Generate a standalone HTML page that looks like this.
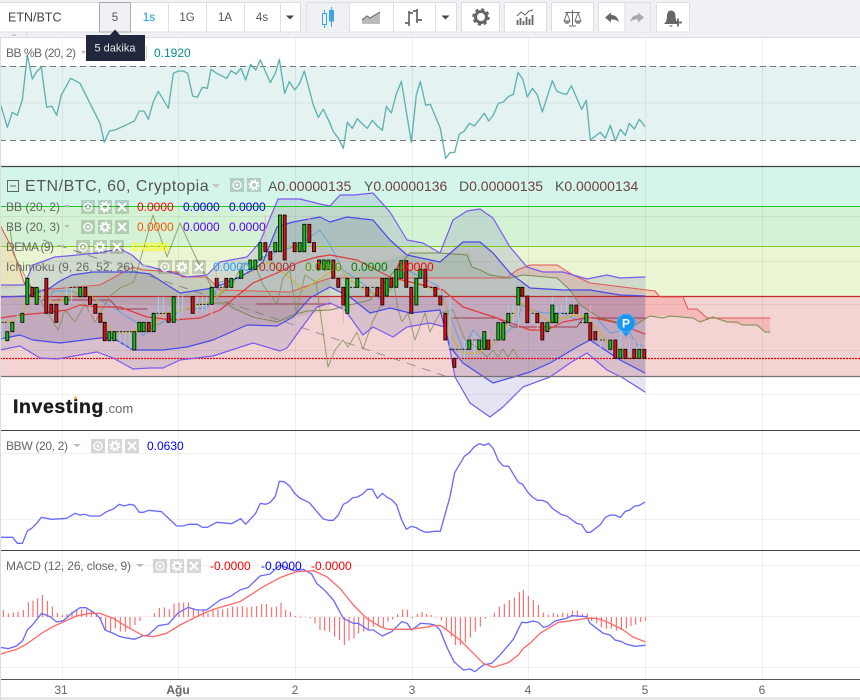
<!DOCTYPE html>
<html><head><meta charset="utf-8"><title>ETN/BTC</title>
<style>
html,body{margin:0;padding:0;background:#fff;width:860px;height:700px;overflow:hidden}
svg{display:block;font-family:"Liberation Sans",sans-serif}
.l{font-size:12px;fill:#666}
.v{font-size:12px}
.t{font-size:11.5px;fill:#555;text-anchor:middle}
.a{font-size:12px;fill:#666;text-anchor:middle}
.p{fill:none;stroke-linejoin:round;stroke-linecap:round}
.h{font-size:14px;fill:#703f3f}
.h tspan{fill:#555}
</style></head><body>
<svg width="860" height="700" viewBox="0 0 860 700" xmlns="http://www.w3.org/2000/svg">
<defs>
<g id="eye"><rect width="14" height="14" fill="#000" opacity=".16"/><circle cx="7" cy="7" r="4" fill="none" stroke="#fff" stroke-width="1.3"/><circle cx="7" cy="7" r="1.4" fill="#fff"/></g>
<g id="gear"><rect width="14" height="14" fill="#000" opacity=".16"/><circle cx="7" cy="7" r="3" fill="none" stroke="#fff" stroke-width="2"/><circle cx="7" cy="7" r="4.8" fill="none" stroke="#fff" stroke-width="1.6" stroke-dasharray="2 1.77"/></g>
<g id="x"><rect width="14" height="14" fill="#000" opacity=".16"/><path d="M3 3L11 11M11 3L3 11" stroke="#fff" stroke-width="2"/></g>
<g id="tri"><use href="#eye"/><use href="#gear" x="17"/><use href="#x" x="34"/></g>
</defs>

<rect width="860" height="700" fill="#fff"/>

<!-- panel 1 -->
<rect x="0" y="66" width="860" height="74" fill="#e4f2f1"/>
<path d="M0 103H860" stroke="#d6e7e5"/>

<!-- main zones -->
<rect x="0" y="167" width="860" height="40" fill="#d3f5ea"/>
<rect x="0" y="207" width="860" height="39.500" fill="#d4f3d5"/>
<rect x="0" y="246.500" width="860" height="50" fill="#e9f5d3"/>
<rect x="0" y="296.500" width="860" height="80" fill="#f4d3d3"/>

<!-- horizontal grid -->
<g stroke="#000" stroke-opacity=".06">
<path d="M0 216.500H860M0 261.500H860M0 304.500H860M0 350.500H860M0 394.500H860"/>
<path d="M0 453.500H860M0 519.500H860"/>
<path d="M0 565.500H860M0 616.500H860M0 667.500H860"/>
<path d="M62.500 38V680M178.500 38V680M295.500 38V680M412.500 38V680M528.500 38V680M645.500 38V680M762.500 38V680"/>
</g>

<!-- panel 1 dashes + line -->
<path d="M0 66.500H860M0 140.500H860" stroke="#777" stroke-width="1" stroke-dasharray="6 4"/>
<g transform="translate(0,40) scale(.33333)"><path class="p" stroke="#5fb1b0" stroke-width="4" d="M3 197L22 262 37 217 52 226 67 180 82 45 97 117 110 95 124 82 140 202 155 198 170 226 184 165 212 115 240 130 300 250 313 307 328 273 345 270 372 258 403 243 418 213 432 213 445 238 460 185 475 154 505 205 520 100 535 93 550 93 563 100 578 168 592 172 607 142 622 145 633 88 650 100 680 115 693 92 708 102 723 85 737 120 752 73 767 90 781 60 811 128 827 97 838 58 854 160 868 125 884 150 899 130 913 93 940 195 955 232 970 208 990 250"/></g>
<g transform="translate(330,40) scale(.33333)"><path class="p" stroke="#5fb1b0" stroke-width="4" d="M0 250L10 275 25 295 40 325 52 247 67 265 82 236 97 252 112 265 127 241 142 258 157 271 169 199 184 219 198 165 214 124 244 307 259 165 271 124 287 196 301 193 331 265 347 355 360 338 374 337 388 283 403 273 418 250 433 258 463 220 476 243 490 225 505 190 520 186 536 169 550 163 564 97 578 117 592 171 607 145 622 165 637 216 667 122 680 153 695 160 710 163 724 137 755 208 769 181 781 300 811 277 826 295 841 256 856 303 871 268 886 286 898 250 913 267 928 238 944 258"/></g>

<!-- ichimoku clouds -->
<path d="M0 222L13 250 25 285 0 290Z" fill="#e89a50" opacity=".18"/>
<path d="M25 285L40 290 100 285 133 267 177 272 207 277 220 290 290 292 330 278 330 310 277 322 233 308 207 303 150 305 60 300Z" fill="#9a7a40" opacity=".13"/>
<path d="M410 253L470 253 472 267 490 275 510 278 470 278 330 278Z" fill="#40b040" opacity=".1"/>
<path d="M510 278L517 270 530 265 557 265 573 275 590 283 655 291 660 297 683 297 688 309 697 309 707 318 770 318 770 332 765 332 757 325 742 325 727 322 713 317 700 322 693 318 670 316 650 316 635 325 620 323 600 318 580 305 570 290 557 278 523 275Z" fill="#ff4040" opacity=".18"/>

<!-- BB fills -->
<path d="M0 285L24 285 33 265 55 257 67 256 97 253 120 249 132 255 143 265 170 272 187 277 207 275 220 262 247 257 260 242 278 199 300 199 320 204 330 206 340 195 355 195 373 193 390 212 407 240 423 243 440 253 453 220 467 211 480 209 493 218 510 247 527 267 543 272 563 272 587 279 607 275 620 278 645 277 645 392 623 378 607 370 587 353 570 363 550 377 523 387 503 407 490 417 470 403 455 377 450 350 445 327 430 323 407 327 393 337 373 327 363 335 345 310 330 303 317 307 300 330 287 348 280 351 253 343 213 356 180 360 163 368 150 368 133 369 113 358 97 352 57 359 40 358 20 346 0 350Z" fill="#5a5ab0" opacity=".16"/>
<path d="M0 297L27 296 50 288 60 281 72 275 93 272 133 272 150 274 180 293 200 290 213 288 233 280 253 270 263 262 277 227 293 222 320 217 330 222 347 217 373 220 390 240 407 255 440 262 463 242 480 242 493 253 510 273 530 288 563 290 590 290 620 295 645 296 645 373 620 360 590 340 577 347 550 363 530 372 510 378 493 383 463 363 450 347 440 310 410 313 390 308 370 313 350 297 330 287 310 298 293 317 277 326 247 325 213 340 187 347 163 350 133 350 113 338 100 338 60 343 33 340 20 335 0 339Z" fill="#504078" opacity=".17"/>

<!-- zone lines -->
<path d="M0 206.500H860" stroke="#1fc81f"/>
<path d="M0 246.500H860" stroke="#80cc20"/>
<path d="M0 296.500H860" stroke="#c22a2a" stroke-width="1.200"/>
<path d="M0 358.500H860" stroke="#f00" stroke-dasharray="2 1" stroke-width="1.200"/>

<!-- dashed trend -->
<path d="M43 240L445 376" stroke="#777" stroke-opacity=".75" stroke-dasharray="9 7" fill="none"/>

<!-- ichimoku lines -->
<path class="p" stroke="#e25555" d="M0 225L13 250 25 285 40 290 100 285 133 267 143 270 177 272 182 277 207 277 220 290 290 292 330 278 507 278 517 270 530 265 557 265 573 275 590 283 655 291 660 297 683 297 688 309 697 309 707 318 770 318"/>
<path class="p" stroke="#7a8a50" d="M207 303L227 303 233 308 253 317 277 322 293 315 307 311 330 310 370 300 395 270 410 253 440 253 467 255 472 267 480 270 490 275 510 278 523 275 557 278 570 290 580 305 600 318 620 323 635 325 650 316 663 318 670 316 693 318 700 322 713 317 727 322 737 322 742 325 757 325 765 332 770 332"/>
<path class="p" stroke="#a03a4a" d="M42 300H110L118 309H147M257 304H330M453 318H497L513 327H577L583 318H645"/>
<!-- chikou -->
<path class="p" stroke="#7f8f55" stroke-opacity=".8" d="M10 227L13 253 27 280 40 300 58 330 65 310 75 322 85 304 95 322 110 296 120 288 134 282 153 215 167 257 180 223 197 260 217 297 233 283 243 263 257 270 263 285 277 304 283 278 290 270 296 313 305 275 316 282 328 367 335 350 343 340 348 347 357 332 363 349 372 323 380 307 393 278 398 310 402 322 408 313 415 340 425 313 430 332 440 313 453 310 465 340 475 346 487 357 493 350 498 357 503 349 508 357 513 349 518 358"/>

<!-- tenkan -->
<path class="p" stroke="#5b9bd5" stroke-opacity=".85" d="M50 298L53 291 72 291 80 295 100 300 117 310 137 323 143 336 153 327 173 317 180 310 207 308 213 297 220 282 240 278 250 270 263 257 277 252 300 245 320 230 330 245 343 270 355 278 367 287 380 300 393 287 400 278 407 270 440 287 445 305 453 323 463 350 473 330 490 347 507 332 517 323 522 305 532 310 543 313 563 313 577 320 597 318 610 333 625 330 630 333 637 345 645 346"/>
<!-- DEMA -->
<path class="p" stroke="#c9b244" stroke-opacity=".85" stroke-width="1.500" d="M2 322L13 322 23 313 28 300 37 290 43 297 57 303 67 297 80 290 97 300 103 320 113 332 127 333 137 330 153 330 163 313 173 313 213 300 233 280 250 272 270 262 290 278 303 290 338 267 350 280 370 293 387 293 397 280 400 280 430 287 445 303 453 340 463 353 477 353 490 347 500 337 510 320 522 303 537 313 550 322 573 315 587 317 597 330 610 345 623 350 633 357 645 358"/>

<!-- BB lines -->
<path class="p" stroke="#7a5af0" stroke-width="1.200" d="M0 285L24 285 33 265 55 257 67 256 97 253 120 249 132 255 143 265 170 272 187 277 207 275 220 262 247 257 260 242 278 199 300 199 320 204 330 206 340 195 355 195 373 193 390 212 407 240 423 243 440 253 453 220 467 211 480 209 493 218 510 247 527 267 543 272 563 272 587 279 607 275 620 278 645 277"/>
<path class="p" stroke="#7a5af0" stroke-width="1.200" d="M0 350L20 346 40 358 57 359 97 352 113 358 133 369 150 368 163 368 180 360 213 356 253 343 280 351 287 348 300 330 317 307 330 303 345 310 363 335 373 327 393 337 407 327 430 323 445 327 450 350 455 377 470 403 490 417 503 407 523 387 550 377 570 363 587 353 607 370 623 378 645 392"/>
<path class="p" stroke="#4a4ae8" stroke-width="1.200" d="M0 297L27 296 50 288 60 281 72 275 93 272 133 272 150 274 180 293 200 290 213 288 233 280 253 270 263 262 277 227 293 222 320 217 330 222 347 217 373 220 390 240 407 255 440 262 463 242 480 242 493 253 510 273 530 288 563 290 590 290 620 295 645 296"/>
<path class="p" stroke="#4a4ae8" stroke-width="1.200" d="M0 339L20 335 33 340 60 343 100 338 113 338 133 350 163 350 187 347 213 340 247 325 277 326 293 317 310 298 330 287 350 297 370 313 390 308 410 313 440 310 450 347 463 363 493 383 510 378 530 372 550 363 577 347 590 340 620 360 645 373"/>
<path class="p" stroke="#e03a3a" stroke-width="1.200" d="M0 318L20 315 43 313 67 310 80 305 100 307 120 307 147 317 173 320 200 318 220 310 253 283 277 273 300 262 317 257 330 255 357 260 390 277 443 290 463 307 497 318 530 330 547 330 563 322 590 317 613 322 645 334"/>

<!-- candles: zoom-4 coords -->
<g transform="translate(0,270) scale(.33333)">
<path stroke="#9fd3e6" stroke-width="3" d="M7 150V210M52 130V157M125 20V90M200 50V80M215 50V100M360 185V230M375 185V235M390 185V235M475 80V130M490 80V130M535 70V150M548 70V130M592 80V130M608 80V130M620 80V130"/>
<path stroke="#f5a9b5" stroke-width="3" d="M270 103V150M286 130V150M635 103V150"/>
<path stroke="#000" stroke-width="2.500" stroke-dasharray="6 4" d="M5 157H20M210 52H232M340 185H395M470 130H495M590 103H630M660 52H672M705 25H720"/>
<path fill="#0fc40f" stroke="#000" stroke-width="2.500" d="M17.500 185h9v27h-9zM32.500 157h9v28h-9zM62.500 130h9v27h-9zM77.500 25h9v78h-9zM105.500 52h9v51h-9zM194.500 80h9v23h-9zM236.500 52h9v28h-9zM323.500 185h9v27h-9zM338.500 185h9v27h-9zM398.500 185h9v55h-9zM413.500 157h9v28h-9zM426.500 157h9v28h-9zM456.500 130h9v55h-9zM516.500 80h9v77h-9zM630.500 52h9v51h-9zM689.500 25h9v27h-9zM719.500 0h9v25h-9z"/>
<path fill="#e01010" stroke="#000" stroke-width="2.500" d="M92.500 52h9v28h-9zM134.500 25h9v105h-9zM149.500 103h9v27h-9zM164.500 103h9v54h-9zM251.500 52h9v28h-9zM265.500 80h9v23h-9zM281.500 103h9v27h-9zM296.500 130h9v27h-9zM309.500 157h9v55h-9zM441.500 157h9v28h-9zM501.500 130h9v27h-9zM573.500 80h9v50h-9zM645.500 25h9v27h-9zM674.500 25h9v27h-9z"/>
</g>
<g transform="translate(0,170) scale(.33333)">
<path stroke="#f5a9b5" stroke-width="3" d="M796 135V218M928 140V163M649 290V325"/>
<path fill="#0fc40f" stroke="#000" stroke-width="2.500" d="M746.500 270h9v28h-9zM761.500 270h9v28h-9zM776.500 218h9v52h-9zM821.500 218h9v27h-9zM835.500 135h9v110h-9zM894.500 218h9v27h-9zM908.500 163h9v82h-9zM966.500 270h9v28h-9zM980.500 270h9v28h-9z"/>
<path fill="#e01010" stroke="#000" stroke-width="2.500" d="M791.500 218h9v27h-9zM806.500 245h9v25h-9zM849.500 135h9v135h-9zM879.500 218h9v27h-9zM923.500 163h9v55h-9zM937.500 218h9v27h-9zM952.500 270h9v28h-9z"/>
</g>
<g transform="translate(330,190) scale(.33333)">
<path stroke="#9fd3e6" stroke-width="3" d="M360 320V480M390 470V505M403 450V505M433 425V500M535 345V415M550 345V400M565 345V420M608 370V400M667 320V345M680 345V400M695 345V370M710 320V370M811 450V500M871 420V478M898 450V505M928 460V478"/>
<path stroke="#f5a9b5" stroke-width="3" d="M40 345V400M113 265V292M128 265V292M301 265V292M331 265V318M475 425V450M622 398V420M781 345V398M886 450V478M913 450V478M943 450V478"/>
<path stroke="#000" stroke-width="2.500" stroke-dasharray="6 4" d="M60 292H80M95 292H110M125 292H135M300 292H312M358 478H412M430 450H445M490 450H500M545 370H555M605 370H615M695 370H720M750 398H765M810 450H825M895 505H908"/>
<path fill="#0fc40f" stroke="#000" stroke-width="2.500" d="M47.500 265h9v105h-9zM77.500 265h9v27h-9zM165.500 265h9v53h-9zM194.500 238h9v54h-9zM209.500 212h9v53h-9zM254.500 265h9v80h-9zM266.500 238h9v27h-9zM413.500 450h9v28h-9zM443.500 450h9v28h-9zM458.500 425h9v53h-9zM500.500 398h9v52h-9zM515.500 398h9v52h-9zM530.500 370h9v28h-9zM560.500 292h9v53h-9zM647.500 398h9v27h-9zM662.500 345h9v53h-9zM674.500 370h9v28h-9zM719.500 345h9v25h-9zM764.500 370h9v28h-9zM836.500 450h9v28h-9zM866.500 478h9v27h-9zM923.500 478h9v27h-9z"/>
<path fill="#e01010" stroke="#000" stroke-width="2.500" d="M5.500 210h9v55h-9zM20.500 265h9v27h-9zM35.500 292h9v53h-9zM107.500 292h9v26h-9zM137.500 292h9v26h-9zM152.500 265h9v80h-9zM179.500 265h9v27h-9zM224.500 212h9v80h-9zM239.500 292h9v78h-9zM281.500 238h9v54h-9zM311.500 292h9v26h-9zM326.500 318h9v27h-9zM341.500 370h9v80h-9zM368.500 505h9v27h-9zM470.500 450h9v28h-9zM572.500 292h9v26h-9zM587.500 318h9v80h-9zM617.500 370h9v28h-9zM632.500 398h9v52h-9zM734.500 345h9v25h-9zM776.500 398h9v52h-9zM791.500 425h9v25h-9zM851.500 450h9v55h-9zM881.500 478h9v27h-9zM908.500 478h9v27h-9zM938.500 478h9v27h-9z"/>
</g>

<!-- P bubble -->
<path d="M621 330L626 337 631 330Z" fill="#1a96f0"/>
<circle cx="626" cy="323" r="9" fill="#1a96f0" stroke="#45b0f5" stroke-width="1"/>
<text x="626" y="327.500" font-size="12" font-weight="bold" fill="#fff" text-anchor="middle">P</text>

<!-- Investing logo -->
<text x="13" y="413" font-size="19.500" font-weight="bold" fill="#1c1c1c" stroke="#1c1c1c" stroke-width=".35" letter-spacing=".6">Investing</text>
<text x="105" y="413" font-size="13" fill="#666">.com</text>
<path d="M74 397.500l2-1.500 .8 2-2 2z" fill="#f5a623"/>

<!-- panel dividers -->
<path d="M0 166.500H860" stroke="#444" stroke-width="1.200"/>
<path d="M0 376.500H860" stroke="#7a7070" stroke-width="1.200"/>
<path d="M0 430.500H860" stroke="#444"/>
<path d="M0 550.500H860" stroke="#444"/>
<path d="M0 679.500H860" stroke="#555"/>

<!-- BBW -->
<g transform="translate(0,425) scale(.33333)"><path class="p" stroke="#6a6aff" stroke-width="4" d="M0 337L38 337 52 355 67 355 82 318 95 310 110 295 124 277 155 283 200 280 225 265 240 270 255 268 270 273 300 273 320 260 340 252 358 238 373 243 388 238 403 241 418 262 430 262 445 256 485 260 500 275 530 303 550 303 565 298 592 298 607 307 622 307 650 292 695 296 722 281 737 298 767 265 781 235 797 238 811 232 826 214 838 169 852 170 868 182 884 205 899 219 928 233 955 265 970 282 990 287"/></g>
<g transform="translate(330,425) scale(.33333)"><path class="p" stroke="#6a6aff" stroke-width="4" d="M0 286L10 286 25 270 40 238 52 232 67 219 82 216 97 208 112 193 127 193 142 220 157 205 170 216 185 224 200 240 215 285 229 313 244 304 259 308 274 317 288 322 315 319 331 319 360 215 374 143 403 94 418 83 433 65 448 56 463 61 476 55 490 71 505 107 520 123 536 124 565 172 578 178 592 200 607 216 622 226 637 226 652 232 667 250 695 269 710 273 740 295 755 299 770 322 781 322 811 299 826 277 841 270 856 271 871 277 886 259 898 256 913 244 928 241 944 232"/></g>

<!-- MACD -->
<g transform="translate(0,550) scale(.33333)">
<path fill="none" stroke="#ff4444" stroke-width="3" stroke-opacity=".9" d="M10 201V180M25 201V190M40 201V187M54 201V185M70 201V180M85 201V157M99 201V152M113 201V145M127 201V135M142 201V153M157 201V170M172 201V189M187 201V195M201 201V192M216 201V185M230 201V178M245 201V178M260 201V178M274 201V185M289 201V190M303 201V215M317 201V240M332 201V245M346 201V235M361 201V245M376 201V245M390 201V235M405 201V225M420 201V213M463 201V189M478 201V174M493 201V172M508 201V178M522 201V160M537 201V158M551 201V158M565 201V158M580 201V175M595 201V180M610 201V178M624 201V190M639 201V180M654 201V178M668 201V178M683 201V175M698 201V170M712 201V170M727 201V168M741 201V172M755 201V170M770 201V168M785 201V162M799 201V162M815 201V172M829 201V170M843 201V158M857 201V180M871 201V185M886 201V198M901 201V204M916 201V202M931 201V205M945 201V220M960 201V240M974 201V242M989 201V245M1004 201V260M1019 201V270M1033 201V285M1047 201V272M1062 201V265M1076 201V250M1091 201V245M1105 201V240M1120 201V230M1135 201V225M1150 201V232M1164 201V215M1178 201V208M1193 201V192M1208 201V178M1222 201V180M1237 201V205M1252 201V192M1266 201V186M1280 201V192"/>
<path class="p" stroke="#6a6aff" stroke-width="4" d="M0 292L25 296 50 288 68 272 82 240 97 225 125 190 150 200 170 216 190 212 215 190 240 173 258 173 285 190 300 205 315 240 340 250 360 260 403 268 430 257 445 255 475 227 505 222 535 188 565 172 590 180 620 180 660 150 690 140 720 120 745 112 780 78 810 72 840 45 880 62 910 58 935 72 950 100 975 122 1000 150 1030 205 1060 220 1075 220 1105 240 1120 240 1147 258 1175 245 1205 215 1222 220 1235 240 1262 220 1290 222"/>
<path class="p" stroke="#ff6a6a" stroke-width="4" d="M0 313L25 305 50 298 80 282 125 250 155 232 185 218 230 198 270 190 300 190 340 205 380 230 430 257 460 260 500 250 540 225 600 195 640 178 720 155 790 110 840 83 890 65 940 62 980 80 1020 115 1060 165 1100 205 1140 230 1165 238 1230 238 1290 230"/>
</g>
<g transform="translate(430,550) scale(.33333)">
<path fill="none" stroke="#ff4444" stroke-width="3" stroke-opacity=".9" d="M3 201V195M18 201V203M34 201V212M49 201V238M64 201V260M76 201V285M91 201V285M106 201V278M121 201V263M136 201V245M151 201V230M166 201V206M193 201V188M208 201V170M223 201V161M238 201V150M253 201V143M268 201V126M280 201V120M295 201V138M310 201V150M325 201V165M340 201V188M355 201V195M370 201V188M383 201V192M398 201V188M413 201V190M427 201V182M442 201V182M457 201V191M472 201V191M485 201V213M500 201V220M514 201V232M529 201V236M544 201V236M559 201V242M574 201V240M589 201V236M603 201V228M617 201V224M632 201V216M647 201V212"/>
<path class="p" stroke="#6a6aff" stroke-width="4" d="M0 222L15 225 30 240 50 290 72 335 100 360 120 357 135 365 160 345 185 340 210 315 250 268 275 217 290 218 310 213 325 217 340 232 355 228 375 213 410 205 425 197 470 200 480 220 520 250 540 255 555 270 575 275 590 283 615 289 645 286"/>
<path class="p" stroke="#ff6a6a" stroke-width="4" d="M0 228L30 226 50 240 90 270 130 310 160 340 190 352 235 338 265 315 280 295 300 280 330 250 385 217 425 212 470 205 500 205 530 215 580 240 610 262 645 275"/>
</g>

<!-- time axis -->
<rect x="0" y="697" width="860" height="3" fill="#e8e8e8"/>
<text class="a" x="61" y="694">31</text>
<text class="a" x="178" y="694" font-weight="bold">Ağu</text>
<text class="a" x="295" y="694">2</text>
<text class="a" x="412" y="694">3</text>
<text class="a" x="528" y="694">4</text>
<text class="a" x="645" y="694">5</text>
<text class="a" x="762" y="694">6</text>
<rect x="0" y="38" width="1" height="662" fill="#dcdde0"/>

<!-- legends -->
<text class="l" x="6" y="57" textLength="70">BB %B (20, 2)</text>
<path d="M81 51h5l-2.500 3z" fill="#bbb"/>
<rect x="146" y="46" width="1" height="13" fill="#ccc"/>
<text class="v" x="154" y="57" fill="#078c8c">0.1920</text>

<rect x="7.500" y="180.500" width="11" height="11" fill="none" stroke="#666"/>
<path d="M10 186H16" stroke="#666"/>
<text x="25" y="191" font-size="16" fill="#555" letter-spacing=".53">ETN/BTC, 60, Cryptopia</text>
<path d="M212 184h8l-4 4z" fill="#c4c4c4"/>
<use href="#eye" x="230" y="178"/><use href="#gear" x="247" y="178"/>
<text class="h" x="268" y="191"><tspan>A</tspan>0.00000135</text>
<text class="h" x="364" y="191"><tspan>Y</tspan>0.00000136</text>
<text class="h" x="459" y="191"><tspan>D</tspan>0.00000135</text>
<text class="h" x="555" y="191"><tspan>K</tspan>0.00000134</text>

<text class="l" x="6" y="211">BB (20, 2)</text>
<path d="M64 205h6l-3 3z" fill="#bbb"/>
<use href="#tri" x="81" y="200"/>
<text class="v" x="137" y="211" fill="#ff0000">0.0000</text>
<text class="v" x="183" y="211" fill="#0000ff">0.0000</text>
<text class="v" x="229" y="211" fill="#0000ff">0.0000</text>

<text class="l" x="6" y="231">BB (20, 3)</text>
<path d="M64 225h6l-3 3z" fill="#bbb"/>
<use href="#tri" x="81" y="220"/>
<text class="v" x="137" y="231" fill="#ff5500">0.0000</text>
<text class="v" x="183" y="231" fill="#5500ff">0.0000</text>
<text class="v" x="229" y="231" fill="#5500ff">0.0000</text>

<text class="l" x="6" y="251" textLength="48">DEMA (9)</text>
<path d="M59 245h6l-3 3z" fill="#bbb"/>
<use href="#tri" x="76" y="240"/>
<text class="v" x="132" y="251" fill="#ffff00" stroke="#ffff00" stroke-width=".3">0.0000</text>

<text class="l" x="6" y="271" textLength="128">Ichimoku (9, 26, 52, 26)</text>
<path d="M141 265h6l-3 3z" fill="#bbb"/>
<use href="#tri" x="158" y="260"/>
<text class="v" x="213" y="271" fill="#2299ff">0.0000</text>
<text class="v" x="259" y="271" fill="#a03030">0.0000</text>
<text class="v" x="305" y="271" fill="#559900">0.0000</text>
<text class="v" x="351" y="271" fill="#008000">0.0000</text>
<text class="v" x="397" y="271" fill="#ff0000">0.0000</text>

<text class="l" x="6" y="450" textLength="62">BBW (20, 2)</text>
<path d="M73 444h8l-4 3z" fill="#bbb"/>
<use href="#tri" x="91" y="439"/>
<text class="v" x="147" y="450" fill="#0000ff">0.0630</text>

<text class="l" x="6" y="570" textLength="125">MACD (12, 26, close, 9)</text>
<path d="M136 564h8l-4 3z" fill="#bbb"/>
<use href="#tri" x="153" y="559"/>
<text class="v" x="210" y="570" fill="#ff0000">-0.0000</text>
<text class="v" x="261" y="570" fill="#0000ff">-0.0000</text>
<text class="v" x="311" y="570" fill="#ff0000">-0.0000</text>

<!-- toolbar -->
<rect x="0" y="0" width="860" height="37" fill="#f0f1f5"/>
<rect x="0" y="37" width="860" height="1" fill="#dcdde0"/>
<path d="M26.500 32V37" stroke="#dcdde0"/>
<path d="M11 36h6l-3-2.500z" fill="#ccc"/>
<g fill="#fff" stroke="#dcdee2">
<rect x="-1" y="2.500" width="301.500" height="29.500"/>
<rect x="306.500" y="2.500" width="150" height="29.500"/>
<rect x="461.500" y="2.500" width="38" height="29.500"/>
<rect x="504.500" y="2.500" width="42" height="29.500"/>
<rect x="551.500" y="2.500" width="42" height="29.500"/>
<rect x="598.500" y="2.500" width="52" height="29.500"/>
<rect x="656.500" y="2.500" width="33" height="29.500"/>
</g>
<rect x="307" y="3" width="42" height="29" fill="#f0f1f5"/>
<rect x="625" y="3" width="25" height="29" fill="#f0f1f5"/>
<rect x="99.500" y="2.500" width="31" height="29.500" fill="#f0f1f5" stroke="#aaa"/>
<path d="M168.500 3V32M206.500 3V32M244.500 3V32M280.500 3V32M349.500 3V32M393.500 3V32M435.500 3V32M625 3V32" stroke="#dcdee2"/>
<text x="8" y="21.500" font-size="12.500" fill="#444">ETN/BTC</text>
<text class="t" x="115" y="21">5</text>
<text class="t" x="149" y="21" style="fill:#3cabe0" stroke="#3cabe0" stroke-width=".25">1s</text>
<text class="t" x="187" y="21">1G</text>
<text class="t" x="225" y="21">1A</text>
<text class="t" x="262" y="21">4s</text>
<path d="M286 15.500h8l-4 4z" fill="#444"/>
<path d="M441.500 15.500h8l-4 4z" fill="#444"/>

<!-- candle icon -->
<g stroke="#3aa8e0" fill="none">
<rect x="322.500" y="13.500" width="4" height="11"/>
<path d="M324.500 10V13M324.500 25V28M331.500 7V10M331.500 21V27"/>
<rect x="329.500" y="10.500" width="4" height="10.500" fill="#3aa8e0"/>
</g>
<!-- area icon -->
<path d="M362 24V20L367 16 370 18 375 15 380 12V24Z" fill="#bbb"/>
<path d="M362 20L367 16 370 18 375 15 380 12" fill="none" stroke="#777" stroke-width="1.300"/>
<!-- bars icon -->
<path d="M409 11V26M405 23H409M409 13H413M417 9V23M413 11H417M417 20H422" fill="none" stroke="#666" stroke-width="1.700"/>
<!-- gear -->
<circle cx="481" cy="17" r="5.500" fill="none" stroke="#666" stroke-width="3"/>
<circle cx="481" cy="17" r="7.500" fill="none" stroke="#666" stroke-width="2.500" stroke-dasharray="3 2.890"/>
<!-- indicators icon -->
<path d="M517.500 25V20M520.500 25V18M523.500 25V21M526.500 25V17M529.500 25V19M532.500 25V15" stroke="#666" stroke-width="1.800"/>
<path d="M517 16L521 12 525 15 529 11 533 10" fill="none" stroke="#666" stroke-width="1"/>
<!-- scales -->
<path d="M572.500 10V25M565 12.500H580M569 26H576" stroke="#666" fill="none"/>
<path d="M567 13L564 21H570ZM578 13L575 21H581Z" fill="none" stroke="#666" stroke-width=".9"/>
<path d="M564 21A3 3 0 0 0 570 21ZM575 21A3 3 0 0 0 581 21Z" fill="#888"/>
<!-- undo / redo -->
<path d="M605 17.500L611 12.500V15C616 15 618 18 619 22.500 617 19.500 614 19.500 611 19.500V22.500Z" fill="#666"/>
<path d="M644 17.500L638 12.500V15C633 15 631 18 630 22.500 632 19.500 635 19.500 638 19.500V22.500Z" fill="#aaa"/>
<!-- alert -->
<path d="M664 24C666 22 667 20 667 16 667 12 669 10.500 671 10.500 673 10.500 675.500 12 675.500 16 675.500 19 676.500 21.500 678 23L678 24Z" fill="#666"/>
<path d="M669 25.500h4l-2 1.500z" fill="#666"/>
<path d="M674 22.500H682M678 18.500V26.500" stroke="#666" stroke-width="1.800"/>

<!-- tooltip -->
<path d="M110 35L115 29.500 120 35Z" fill="#21283d"/>
<rect x="86" y="35" width="59" height="26" fill="#21283d"/>
<text x="94.500" y="51.500" font-size="11" fill="#e8e8e8">5 dakika</text>
</svg>
</body></html>
